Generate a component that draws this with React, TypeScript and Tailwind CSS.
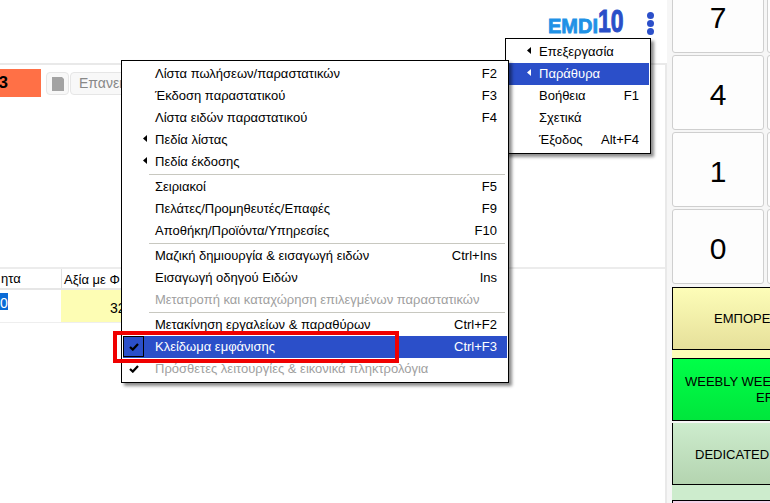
const F = { fontFamily: '"Liberation Sans", Arial, sans-serif' };

type Item = {
  label?: string;
  key2?: string;
  sub?: boolean;
  check?: boolean;
  disabled?: boolean;
  active?: boolean;
  sep?: boolean;
};

const MAIN: Item[] = [
  { label: "Λίστα πωλήσεων/παραστατικών", key2: "F2" },
  { label: "Έκδοση παραστατικού", key2: "F3" },
  { label: "Λίστα ειδών παραστατικού", key2: "F4" },
  { label: "Πεδία λίστας", sub: true },
  { label: "Πεδία έκδοσης", sub: true },
  { sep: true },
  { label: "Σειριακοί", key2: "F5" },
  { label: "Πελάτες/Προμηθευτές/Επαφές", key2: "F9" },
  { label: "Αποθήκη/Προϊόντα/Υπηρεσίες", key2: "F10" },
  { sep: true },
  { label: "Μαζική δημιουργία & εισαγωγή ειδών", key2: "Ctrl+Ins" },
  { label: "Εισαγωγή οδηγού Ειδών", key2: "Ins" },
  { label: "Μετατροπή και καταχώρηση επιλεγμένων παραστατικών", disabled: true },
  { sep: true },
  { label: "Μετακίνηση εργαλείων & παραθύρων", key2: "Ctrl+F2" },
  { label: "Κλείδωμα εμφάνισης", key2: "Ctrl+F3", check: true, active: true },
  { label: "Πρόσθετες λειτουργίες & εικονικά πληκτρολόγια", check: true, disabled: true },
];

const SIDE: Item[] = [
  { label: "Επεξεργασία", sub: true },
  { label: "Παράθυρα", sub: true, active: true },
  { label: "Βοήθεια", key2: "F1" },
  { label: "Σχετικά" },
  { label: "Έξοδος", key2: "Alt+F4" },
];

function Arrow({ white }: { white?: boolean }) {
  return (
    <svg width="4" height="7" viewBox="0 0 4 7" className="absolute left-[-12px] top-[5px]">
      <path d="M4 0V7L0 3.5Z" fill={white ? "#fff" : "#000"} />
    </svg>
  );
}

function Tick() {
  return (
    <svg width="10" height="8" viewBox="0 0 10 8">
      <path d="M1 4L3.8 6.6L9 1" fill="none" stroke="#000" strokeWidth="2.2" />
    </svg>
  );
}

function MenuRow({ item, textLeft }: { item: Item; textLeft: number }) {
  return (
    <div
      className={`flex h-[22px] items-center justify-between text-[13px] ${
        item.active ? "bg-[#2b4fc9] text-white" : item.disabled ? "text-[#a0a0a0]" : "text-black"
      }`}
      style={{ paddingLeft: textLeft }}
    >
      <span className="relative whitespace-nowrap">
        {item.sub && <Arrow white={item.active} />}
        {item.label}
      </span>
      <span className="pr-[10px]">{item.key2}</span>
    </div>
  );
}

function Key({ n }: { n: string }) {
  return (
    <div className="flex h-[75px] w-[92px] shrink-0 items-center justify-center rounded-[3px] border border-[#cfcfcf] bg-[#fdfdfd] pt-[4px] text-[30px] text-black">
      {n}
    </div>
  );
}

export default function App() {
  return (
    <div className="relative flex h-[503px] w-[770px] overflow-hidden bg-white" style={F}>
      {/* main area */}
      <div className="flex w-[667px] shrink-0 flex-col">
        <div className="h-[63px] shrink-0 bg-white" />
        <div className="flex-1 border-t-[2px] border-r-[2px] border-[#e9e9e9] bg-white">
          <div className="flex h-[34px] items-start pt-[4px]">
            <div className="flex h-[28px] w-[41px] items-center justify-end bg-[#ff7046] pr-[33px] text-[17px] font-bold text-black">
              3
            </div>
            <div className="ml-[5px] mt-[3px] flex h-[23px] w-[23px] items-center justify-center rounded-[4px] border border-[#e6e6e6] bg-[#f8f8f8]">
              <svg width="12" height="14" viewBox="0 0 12 14">
                <path d="M0 0H10L12 2V14H0Z" fill="#a3a3a3" />
              </svg>
            </div>
            <div className="ml-[1px] mt-[3px] flex h-[23px] w-[70px] items-center rounded-[4px] border border-[#e6e6e6] bg-[#f8f8f8] pl-[8px] text-[14px] text-[#888]">
              Επανεκ
            </div>
          </div>
          <div className="mt-[168px] border-t-[2px] border-[#ececec]">
            <div className="w-[200px]">
              <div className="flex h-[21px] items-center border-b-[2px] border-[#e6e6e6] bg-white text-[13px] text-black">
                <div className="w-[61px] pl-[1px]">ητα</div>
                <div className="h-full border-l border-[#e0e0e0] pl-[2px] leading-[21px]">Αξία με Φ</div>
              </div>
              <div className="flex h-[33px] border-b border-[#eee] text-[13px]">
                <div className="w-[61px] pt-[3px] text-[14px]">
                  <span className="inline-block h-[17px] w-[8px] bg-[#0a6ad6] text-white">0</span>
                </div>
                <div className="flex w-[100px] items-center bg-[#fdfdb4] pl-[49px] pt-[4px] text-[14px] text-black">32</div>
              </div>
            </div>
          </div>
        </div>
      </div>

      {/* keypad */}
      <div className="flex flex-1 flex-col overflow-hidden bg-[#f6f6f6] pl-[5px]">
        <div className="mt-[-22px] flex flex-col gap-[2px]">
          {["7", "4", "1", "0"].map(n => (
            <div key={n} className="flex gap-[3px]">
              <Key n={n} />
              <Key n="" />
            </div>
          ))}
        </div>
        <div className="mt-[3px] h-[71px] w-[200px] shrink-0 bg-[#fdfdb8]">
          <div className="flex h-[63px] items-center border border-black bg-gradient-to-b from-[#fdfdb8] to-[#e6e09a] pl-[41px] text-[13px] whitespace-nowrap text-black">
            ΕΜΠΟΡΕΙΟ
          </div>
        </div>
        <div className="flex h-[63px] w-[200px] shrink-0 flex-col justify-center border border-black bg-gradient-to-b from-[#00ff48] to-[#00e63c] text-[13px] leading-[16px] whitespace-nowrap text-black">
          <div className="pl-[12px]">WEEBLY WEEBLY</div>
          <div className="pl-[83px]">ER</div>
        </div>
        <div className="mt-[2px] h-[77px] w-[200px] shrink-0 bg-[#cdeccd]">
          <div className="flex h-[62px] items-center border border-t-0 border-black bg-gradient-to-b from-[#cdeccd] to-[#b4d4b0] pl-[22px] pt-[3px] text-[13px] whitespace-nowrap text-black">
            DEDICATED
          </div>
        </div>
        <div className="h-[10px] w-[200px] shrink-0 border border-black bg-[#f5d0e6]" />
      </div>

      {/* logo */}
      <div className="absolute left-[548px] top-[12px] flex h-[23px] w-[76px] items-end font-bold">
        <span className="w-[50px] text-[20px] leading-[18px] text-[#1f92e6] [-webkit-text-stroke:0.8px_#1f92e6]">
          EMDI
        </span>
        <span className="w-[26px] origin-left scale-x-[0.74] text-[31px] leading-[27px] text-[#2a4fc8] [-webkit-text-stroke:1px_#2a4fc8]">
          10
        </span>
      </div>

      {/* kebab */}
      <div className="absolute left-[647px] top-[12px] flex flex-col gap-[1px]">
        <div className="h-[7px] w-[7px] rounded-full bg-[#2b4fc9]" />
        <div className="h-[7px] w-[7px] rounded-full bg-[#2b4fc9]" />
        <div className="h-[7px] w-[7px] rounded-full bg-[#2b4fc9]" />
      </div>

      {/* side menu */}
      <div className="absolute left-[505px] top-[38px] w-[146px] border border-black bg-white px-[1px] py-[2px] shadow-[3px_3px_3px_rgba(0,0,0,0.45)]">
        {SIDE.map(item => (
          <MenuRow key={item.label} item={item} textLeft={32} />
        ))}
      </div>

      {/* main menu */}
      <div className="absolute left-[121px] top-[60px] w-[388px] border border-black bg-white px-[1px] py-[2px] shadow-[3px_3px_3px_rgba(0,0,0,0.45)]">
        {MAIN.map((item, i) =>
          item.sep ? (
            <div key={i} className="my-[1px] ml-[26px] mr-[2px] h-[1px] bg-[#c8c8c0]" />
          ) : (
            <div key={i} className="relative">
              {item.check && (
                <div
                  className={`absolute left-0 top-0 z-10 flex h-[21px] w-[21px] items-center justify-center ${
                    item.active ? "border border-black bg-[#2b4fc9]" : ""
                  }`}
                >
                  <Tick />
                </div>
              )}
              <MenuRow item={item} textLeft={32} />
            </div>
          )
        )}
      </div>

      {/* red annotation */}
      <div className="absolute left-[113px] top-[331px] h-[32px] w-[286px] border-[4px] border-[#f00000]" />
    </div>
  );
}
